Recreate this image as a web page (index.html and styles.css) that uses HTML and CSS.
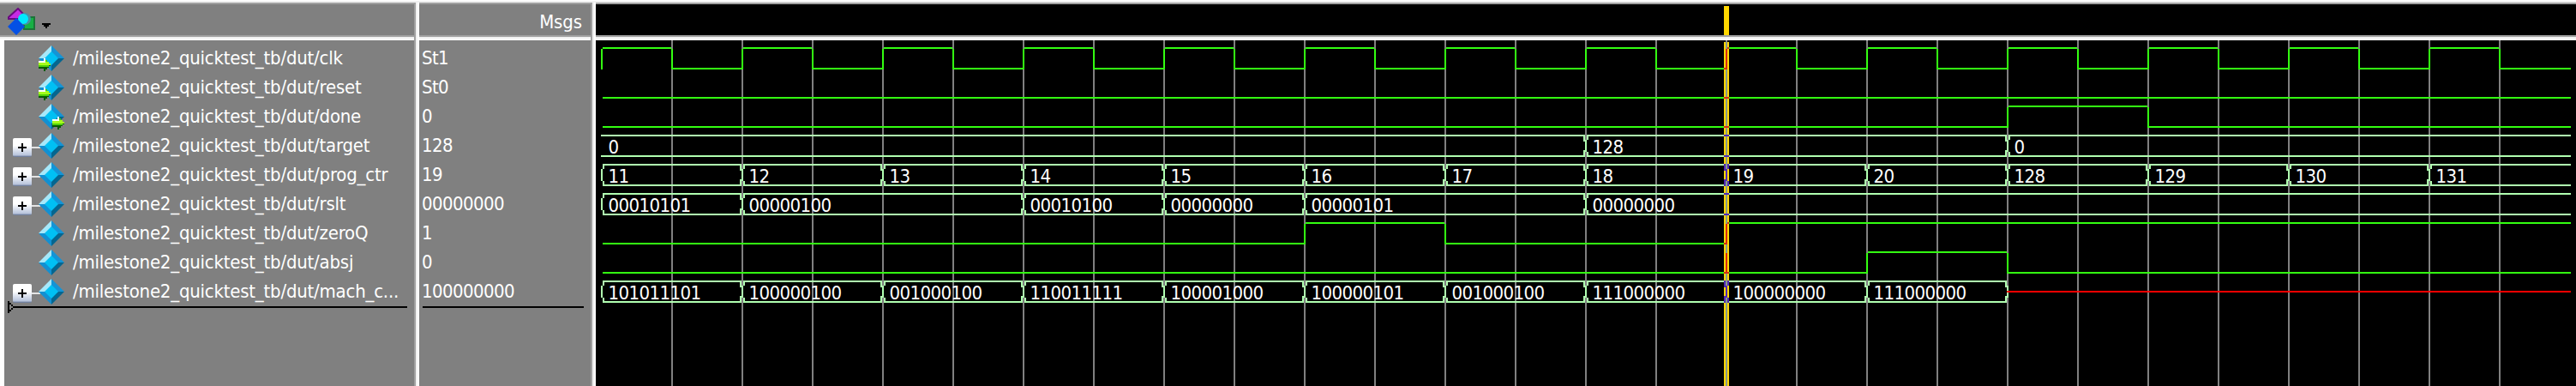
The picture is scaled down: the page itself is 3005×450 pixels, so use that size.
FILE: index.html
```html
<!DOCTYPE html>
<html lang="en">
<head>
<meta charset="utf-8">
<title>Wave</title>
<link rel="stylesheet" href="styles.css">
</head>
<body>
<svg class="defs" width="0" height="0" aria-hidden="true">
  <symbol id="gem" viewBox="0 0 30 30">
    <path d="M15 0L30 15H15Z" fill="#1494d6"/>
    <path d="M15 0V15H0Z" fill="#a6e8fa"/>
    <path d="M0 15H15V30Z" fill="#1290d2"/>
    <path d="M15 30V15H30Z" fill="#056690"/>
    <path d="M15 7L23 15L15 23L7 15Z" fill="#00c0f4"/>
  </symbol>
  <symbol id="arrow" viewBox="0 0 14 16">
    <path d="M0 8H14V10H12V12H10V14H8V16H6V13H0Z" fill="#0a5a05"/>
    <path d="M0 5H6V1H8V3H10V5H12V7H14V9H12V11H0Z" fill="#4fd00a"/>
    <path d="M0 5H12V7H14V9H0Z" fill="#a4fb1c"/>
    <path d="M0 4H6V1H8V6H0Z" fill="#fff"/>
  </symbol>
</svg>

<div class="window">
  <section class="pane names">
    <header class="head">
      <svg class="objects" width="32" height="32" viewBox="0 0 32 32">
        <path d="M1 11L12 1L20 9L14 13H1Z" fill="#c72be4" stroke="#6a0a80" stroke-width="2"/>
        <rect x="19" y="11" width="12" height="14" fill="#17b044" stroke="#1c7438" stroke-width="2"/>
        <circle cx="20" cy="13" r="7" fill="#4a90a6"/>
        <circle cx="18" cy="13" r="6" fill="#00e8ff"/>
        <path d="M10 12L20 22L10 32L0 22Z" fill="#0450e4"/>
      </svg>
      <svg class="caret" width="10" height="6" viewBox="0 0 10 6"><path d="M0 0H10V2H8V4H6V6H4V4H2V2H0Z"/></svg>
    </header>
    <div class="list" id="names"></div>
    <svg class="insert" width="466" height="14" viewBox="0 0 466 14" shape-rendering="crispEdges">
      <path d="M0 0H2V14H0ZM2 2H4V4H2ZM4 4H6V6H4ZM2 10H4V12H2ZM4 8H6V10H4ZM6 6H466V8H6Z"/>
    </svg>
  </section>
  <section class="pane values">
    <header class="head head-right">Msgs</header>
    <div class="list" id="values"></div>
    <div class="rule"></div>
  </section>
  <section class="pane waves">
    <header class="head head-wave"><div class="cursor-tab"></div></header>
    <svg class="plot" id="plot" width="2310" height="403" viewBox="695 47 2310 403"></svg>
  </section>
</div>
<script src="wave.js"></script>
</body>
</html>
```
FILE: styles.css
```css
body {
  margin: 0;
  background: #fff;
  font-family: "DejaVu Sans Condensed", "DejaVu Sans", sans-serif;
  font-stretch: condensed;
  font-size: 22px;
  color: #fff;
}
.defs { display: block; position: absolute; }
.window {
  box-sizing: border-box;
  width: 3005px;
  height: 450px;
  padding-top: 1px;
  display: grid;
  grid-template-columns: 489px 206px 2310px;
  overflow: hidden;
}
.pane {
  box-sizing: border-box;
  height: 449px;
  border-top: 2px solid #f0f0f0;
  background: #808080;
  overflow: hidden;
}
.names, .values {
  background:
    linear-gradient(90deg, #a0a0a0 2px, #f0f0f0 2px 4px, #fff 4px) right / 6px 100% no-repeat,
    #808080;
}
.head {
  box-sizing: border-box;
  height: 44px;
  border-top: 2px solid #a0a0a0;
  background: linear-gradient(#a0a0a0 2px, #f0f0f0 2px 4px, #fff 4px) bottom / 100% 6px no-repeat;
  display: flex;
}
.names .head, .values .head { margin-right: 6px; }
.names .head { padding: 4px 0 0 9px; gap: 8px; }
.caret { margin-top: 18px; }
.head-right {
  justify-content: flex-end;
  padding: 5px 10px 0 0;
  line-height: 32px;
  letter-spacing: -0.1px;
}
.list { padding-top: 4px; }
.names .list, .names .insert { border-left: 5px solid #fff; }
.row { height: 34px; display: flex; align-items: center; }
.names .row { padding-left: 10px; }
.toggle {
  width: 22px;
  height: 22px;
  margin-top: 4px;
  background: linear-gradient(#fff 40%, #b8c4dc 90%, #5d6c8c);
  border-radius: 2px;
}
.toggle svg, .stem, .gem { display: block; }
.stem { width: 10px; height: 2px; margin: 4px -2px 0 0; background: #e4e4e4; }
.bare { width: 30px; }
.icon { position: relative; width: 30px; height: 30px; }
.arrow { position: absolute; top: 14px; left: 0; }
.arrow-out { left: 16px; }
.label { margin-left: 10px; white-space: pre; line-height: 34px; letter-spacing: -0.22px; }
.insert { display: block; height: 14px; margin-top: -6px; padding: 0 0 85px 4px; }
.value { margin-left: 3px; line-height: 34px; letter-spacing: -0.6px; white-space: pre; }
.rule { width: 188px; height: 2px; margin-left: 4px; background: #000; }
.waves { background: #000; }
.cursor-tab { width: 6px; height: 34px; margin: 2px 0 0 1316px; background: #ffd700; }
.plot { display: block; shape-rendering: crispEdges; }
.grid { fill: #808080; }
.bit { fill: #33ff11; }
.bus { fill: #b0ffb0; }
.unknown { fill: #ff0000; }
.cursor { fill: #ffd700; }
.under-cursor .grid { fill: #889a88; }
.under-cursor .bit { fill: #d62c14; }
.under-cursor .bus { fill: #5028b4; }
.data { fill: #fff; letter-spacing: -0.6px; }
```
FILE: wave.js
```js
const START = 702, STEP = 82, END = 2999, CURSOR = 2014;
const at = n => START + n * STEP;
const signals = [
  { name: 'clk', value: 'St1', port: 'in', clock: true },
  { name: 'reset', value: 'St0', port: 'in', high: [] },
  { name: 'done', value: '0', port: 'out', high: [[20, 22]] },
  { name: 'target', value: '128', bus: [[0, '0'], [14, '128'], [20, '0']], openStart: true },
  { name: 'prog_ctr', value: '19', bus: [[0, '11'], [2, '12'], [4, '13'], [6, '14'], [8, '15'], [10, '16'], [12, '17'], [14, '18'], [16, '19'], [18, '20'], [20, '128'], [22, '129'], [24, '130'], [26, '131']] },
  { name: 'rslt', value: '00000000', bus: [[0, '00010101'], [2, '00000100'], [6, '00010100'], [8, '00000000'], [10, '00000101'], [14, '00000000']] },
  { name: 'zeroQ', value: '1', high: [[10, 12], [16, 28]] },
  { name: 'absj', value: '0', high: [[18, 20]] },
  { name: 'mach_c...', value: '100000000', bus: [[0, '101011101'], [2, '100000100'], [4, '001000100'], [6, '110011111'], [8, '100001000'], [10, '100000101'], [12, '001000100'], [14, '111000000'], [16, '100000000'], [18, '111000000']], stop: 20 }
];

/* Name and value columns */
document.getElementById('names').innerHTML = signals.map(s => `
  <div class="row">
    ${s.bus ? '<div class="toggle"><svg width="22" height="22"><path d="M6 10H10V6H12V10H16V12H12V16H10V12H6Z"/></svg></div><div class="stem"></div>' : '<div class="bare"></div>'}
    <div class="icon"><svg class="gem" width="30" height="30"><use href="#gem"/></svg>${s.port ? `<svg class="arrow arrow-${s.port}" width="14" height="16"><use href="#arrow"/></svg>` : ''}</div>
    <div class="label">/milestone2_quicktest_tb/dut/${s.name}</div>
  </div>`).join('');
document.getElementById('values').innerHTML = signals.map(s =>
  `<div class="row"><div class="value">${s.value}</div></div>`).join('');

/* Waveforms */
const rect = (x1, y1, x2, y2) => `M${x1} ${y1}H${x2}V${y2}H${x1}Z`;
let bits = '', buses = '', text = '', grid = '';
for (let n = 1; n <= 27; n++) grid += rect(at(n) - 1, 47, at(n) + 1, 450);

signals.forEach((s, i) => {
  const top = 55 + 34 * i, low = top + 24;
  if (s.bus) {
    const stop = s.stop ? at(s.stop) : END;
    s.bus.forEach(([n, label], k) => {
      const x = at(n), last = k === s.bus.length - 1;
      const next = last ? stop : at(s.bus[k + 1][0]);
      const end = last && !s.stop ? END : next - 1;
      const open = n === 0 && s.openStart;
      const from = open ? x - 1 : x + 1;
      buses += rect(from, top, end, top + 2) + rect(from, low, end, low + 2);
      if (!open) {
        buses += rect(x + 1, top, x + 3, top + 6) + rect(x + 1, top + 20, x + 3, top + 26);
        buses += rect(x - 1, top + 6, x + 1, top + 20);
      }
      if (!last || s.stop) buses += rect(next - 3, top, next - 1, top + 8) + rect(next - 3, top + 18, next - 1, top + 26);
      if (last && s.stop) buses += rect(next - 1, top + 6, next + 1, top + 20);
      text += `<text class="data" x="${x + 7.5}" y="${top + 22}">${label}</text>`;
    });
    return;
  }
  const high = s.clock ? Array.from({ length: 14 }, (_, k) => [2 * k, 2 * k + 1]) : s.high;
  let x = START + 1;
  high.forEach(([a, b]) => {
    if (at(a) > x) bits += rect(x, low, at(a) + 1, low + 2);
    bits += rect(at(a) - 1, top + 2, at(a) + 1, low + 2);
    const end = Math.min(at(b) - 1, END);
    bits += rect(at(a) + 1, top, b === 28 ? END : end, top + 2);
    x = b === 28 ? END : at(b) - 1;
    if (b !== 28) bits += rect(x, top + 2, x + 2, low + 2);
  });
  if (x < END) bits += rect(x, low, END, low + 2);
});

const traces = `<path class="grid" d="${grid}"/><path class="bit" d="${bits}"/><path class="bus" d="${buses}"/>`;
document.getElementById('plot').innerHTML = `
  <clipPath id="slice"><rect x="${CURSOR - 3}" y="49" width="6" height="401"/></clipPath>
  ${traces}
  <path class="unknown" d="${rect(2341, 339, END, 341)}"/>
  <rect class="cursor" x="${CURSOR - 3}" y="49" width="6" height="401"/>
  <g class="under-cursor" clip-path="url(#slice)">${traces}<path class="bit" d="${rect(2013, 295, 2015, 317)}"/></g>
  ${text}`;
```
